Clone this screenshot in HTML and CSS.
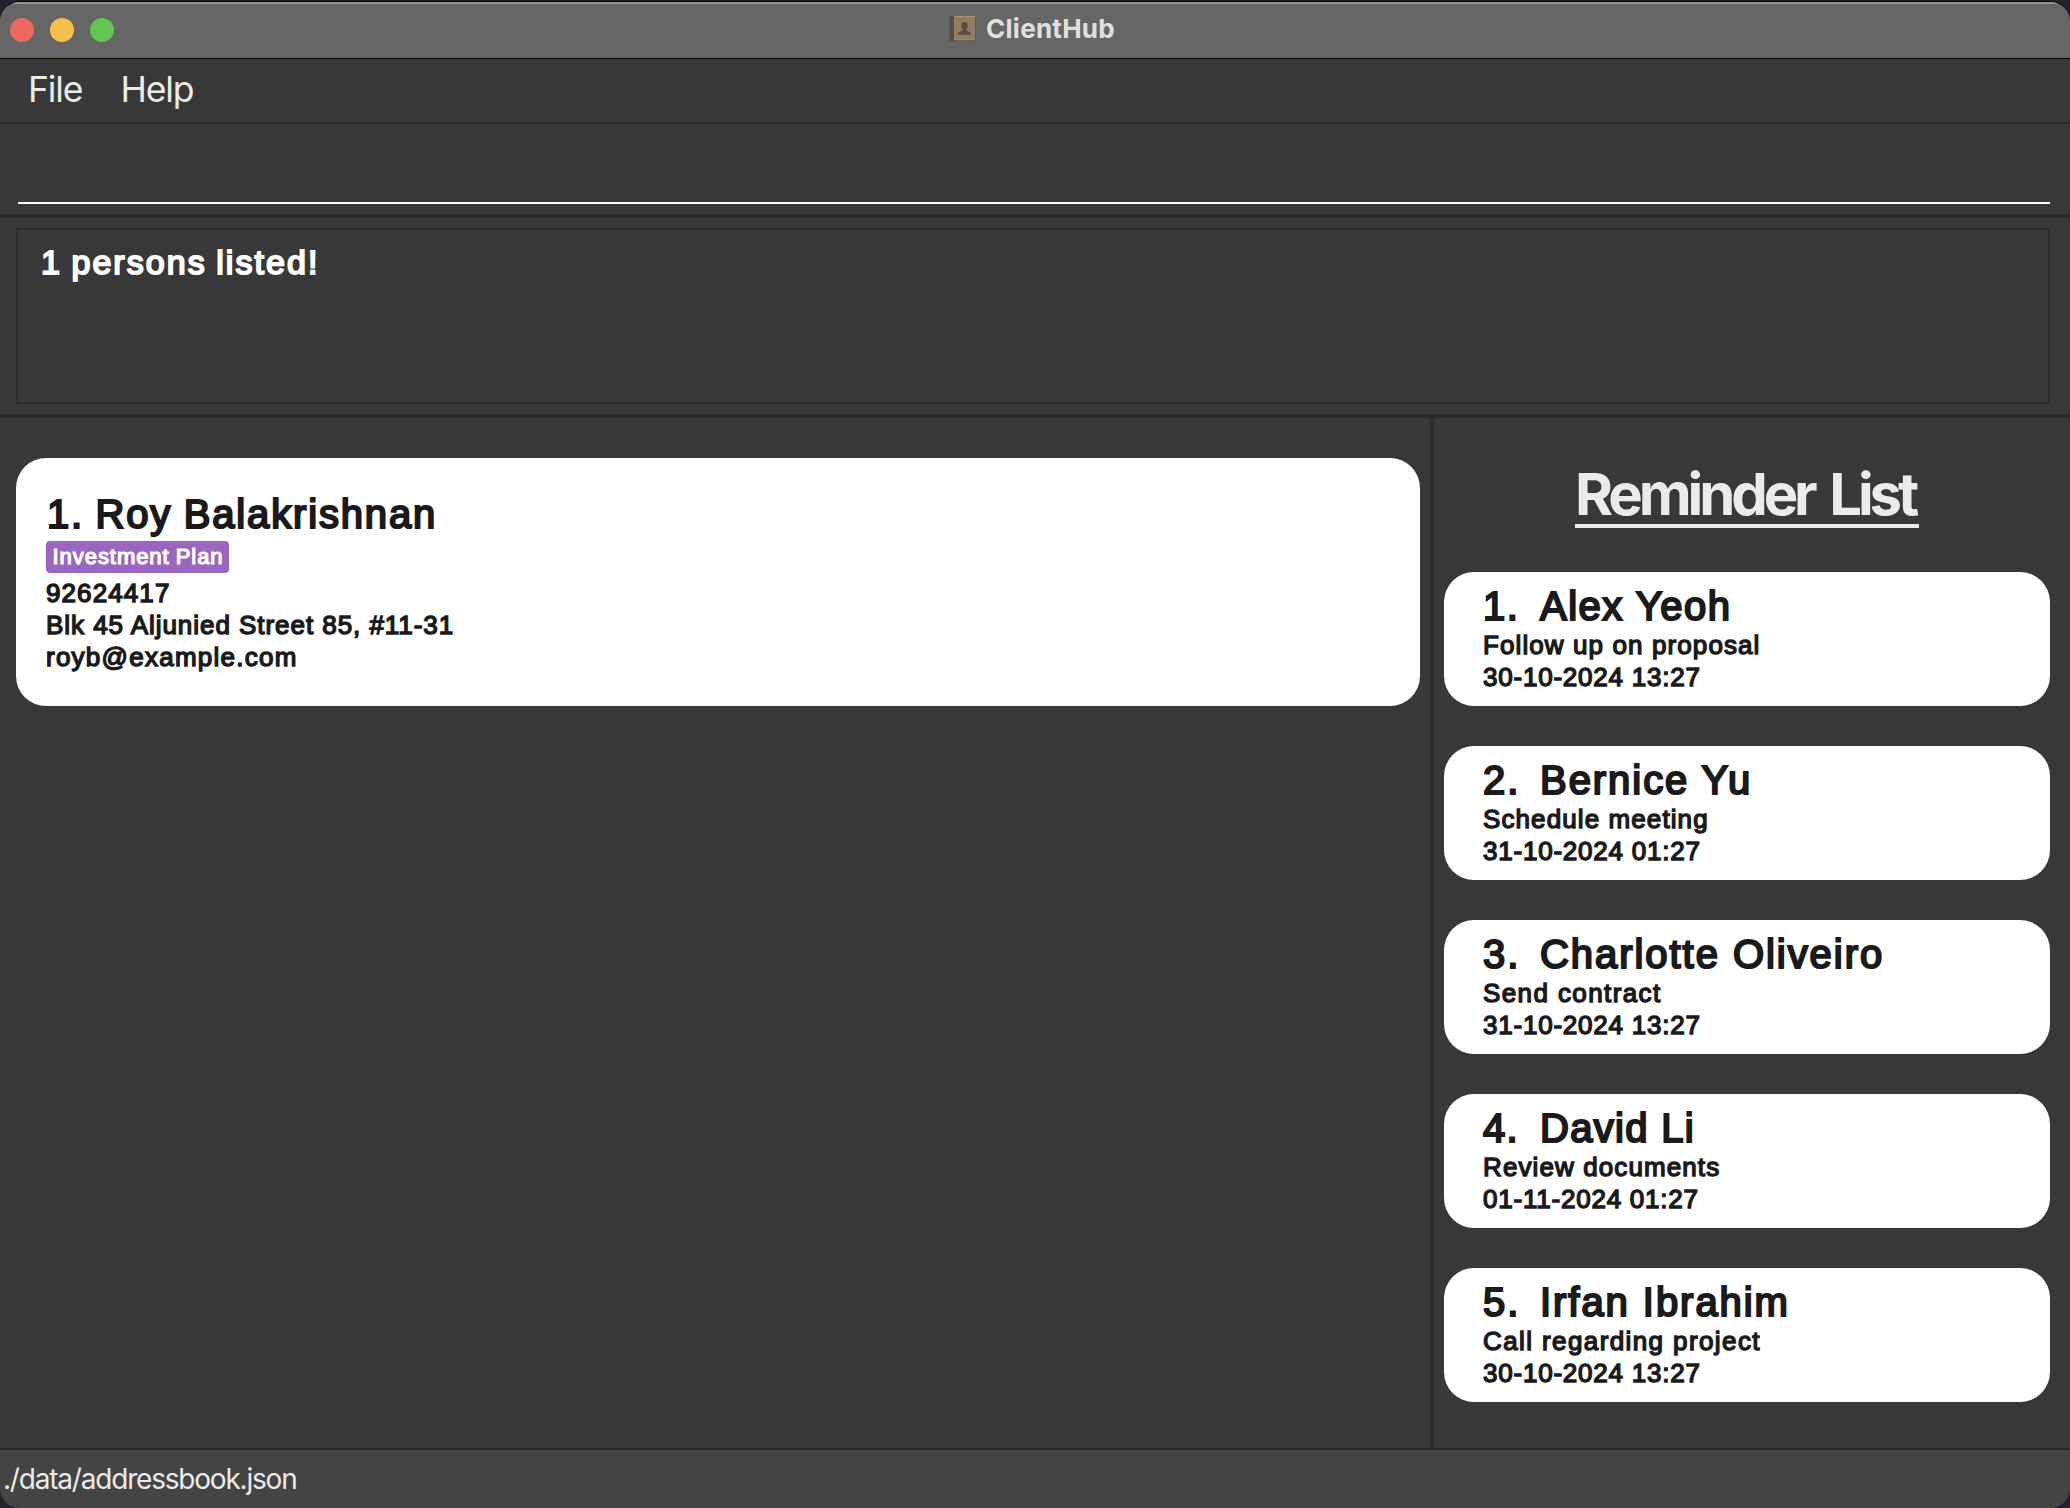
FILE: index.html
```html
<!DOCTYPE html>
<html lang="en">
<head>
<meta charset="utf-8">
<title>ClientHub</title>
<link rel="stylesheet" href="styles.css">
</head>
<body>
<div class="window">
  <header class="titlebar">
    <div class="lights"><i class="light red"></i><i class="light amber"></i><i class="light green"></i></div>
    <div class="app">
      <svg class="app-icon" width="30" height="28" viewBox="0 0 30 28">
        <rect x="1" y="1.5" width="27" height="25" rx="1.5" fill="#5c5a56"/>
        <path d="M2 1h4v25H2z" fill="#554e46"/>
        <path d="M6 1h21v24H6z" fill="#8e7d61"/>
        <path d="M6 1h21v1H6z" fill="#a39373"/>
        <path d="M6 24h21v1.2H6z" fill="#a08a60"/>
        <path d="M16.500 7c2.200 0 3.300 1.600 3.300 3.700 0 1.600-.7 2.800-1.500 3.500v1.300c1.800.8 4.700 1.200 5 4.200H9.700c.3-3 3.200-3.400 5-4.200v-1.300c-.8-.7-1.500-1.900-1.500-3.500 0-2.100 1.100-3.700 3.300-3.700z" fill="#574e40"/>
      </svg>
      <span class="app-name">ClientHub</span>
    </div>
  </header>
  <nav class="menu"><span>File</span><span>Help</span></nav>
  <section class="command"><div class="field"></div></section>
  <section class="result"><div class="result-box"><span class="rounded result-text">1 persons listed!</span></div></section>
  <main class="content">
    <section class="persons">
      <article class="person rounded">
        <h2 class="name full"><span>1. Roy Balakrishnan</span></h2>
        <div class="tags"><span class="tag">Investment Plan</span></div>
        <p class="line">92624417</p>
        <p class="line address">Blk 45 Aljunied Street 85, #11-31</p>
        <p class="line email">royb@example.com</p>
      </article>
    </section>
    <aside class="reminders">
      <h1 class="heading"><span>Reminder List</span></h1>
      <article class="reminder rounded">
        <h2 class="name"><span class="num">1.</span>Alex Yeoh</h2>
        <p class="line">Follow up on proposal</p>
        <p class="line date">30-10-2024 13:27</p>
      </article>
      <article class="reminder rounded">
        <h2 class="name wide"><span class="num">2.</span>Bernice Yu</h2>
        <p class="line">Schedule meeting</p>
        <p class="line date">31-10-2024 01:27</p>
      </article>
      <article class="reminder rounded">
        <h2 class="name wide"><span class="num">3.</span>Charlotte Oliveiro</h2>
        <p class="line wide">Send contract</p>
        <p class="line date">31-10-2024 13:27</p>
      </article>
      <article class="reminder rounded">
        <h2 class="name narrow"><span class="num">4.</span>David Li</h2>
        <p class="line">Review documents</p>
        <p class="line date">01-11-2024 01:27</p>
      </article>
      <article class="reminder rounded">
        <h2 class="name wide"><span class="num">5.</span>Irfan Ibrahim</h2>
        <p class="line wide">Call regarding project</p>
        <p class="line date">30-10-2024 13:27</p>
      </article>
    </aside>
  </main>
  <footer class="status">./data/addressbook.json</footer>
</div>
</body>
</html>
```
FILE: styles.css
```css
* { box-sizing: border-box; margin: 0; padding: 0; }
body { width: 2070px; height: 1508px; overflow: hidden; background: #22222c; font-family: Inter, "Open Sans", sans-serif; color: #ebebeb; padding-top: 1px; }
.window { height: 1507px; display: flex; flex-direction: column; border-radius: 20px; overflow: hidden; background: #383838; border-top: 1px solid #000; }
.titlebar { height: 57px; flex: none; background: #666; border-top: 2px solid #959595; border-bottom: 1px solid #000; display: grid; grid-template-columns: 1fr auto 1fr; align-items: center; }
.lights { display: flex; gap: 16px; padding-left: 10px; }
.light { width: 24px; height: 24px; border-radius: 50%; margin-bottom: 2px; }
.red { background: #ee6a5f; }
.amber { background: #f5bf4f; }
.green { background: #61c654; }
.app { display: flex; align-items: center; gap: 8px; padding: 0 7px 4px 0; }
.app-icon { display: block; }
.app-name { font-size: 26px; line-height: 32px; font-weight: 700; letter-spacing: 0.25px; color: #e0e0e0; }
.menu { height: 65px; flex: none; border-bottom: 2px solid #2b2b2b; display: flex; align-items: center; gap: 38px; padding: 0 0 2px 28px; font-size: 35.5px; line-height: 44px; letter-spacing: -1.1px; }
.command { height: 94px; flex: none; border-bottom: 4px solid #2b2b2b; padding: 0 20px 10px 18px; display: flex; }
.field { flex: 1; border-bottom: 2px solid #fff; }
.result { height: 200px; flex: none; border-bottom: 4px solid #2b2b2b; padding: 10px 20px 10px 16px; display: flex; }
.result-box { flex: 1; border: 2px solid #2b2b2b; padding: 12px 23px; }
.rounded { font-family: "Liberation Sans", Arial, sans-serif; font-weight: 400; -webkit-text-stroke: 1.4px currentColor; }
.result-text { display: inline-block; font-size: 34px; line-height: 40px; color: #fff; letter-spacing: 2.05px; word-spacing: -2px; -webkit-text-stroke-width: 1.9px; }
.content { flex: 1; min-height: 0; display: flex; }
.persons { width: 1434px; border-right: 4px solid #2b2b2b; padding: 40px 10px 0 16px; }
.person { height: 248px; border-radius: 30px; background: #fff; color: #1a1a1a; padding: 33px 30px; }
.name { font-size: 40px; line-height: 46px; font-weight: 400; letter-spacing: 1.5px; -webkit-text-stroke-width: 2.1px; white-space: nowrap; }
.name.full { letter-spacing: 1.85px; word-spacing: -1.5px; padding-left: 1px; }
.name.wide { letter-spacing: 1.95px; }
.name.narrow { letter-spacing: 1.3px; }
.tags { display: flex; height: 40px; padding-top: 4px; }
.tag { height: 32px; width: 183px; border-radius: 4px; background: #9b66c0; color: #fff; font-size: 22px; line-height: 31px; letter-spacing: 0.95px; word-spacing: -1px; padding: 0 6.5px; white-space: nowrap; -webkit-text-stroke-width: 1.2px; }
.line { font-size: 26px; line-height: 32px; letter-spacing: 1.1px; white-space: nowrap; }
.line.wide { letter-spacing: 1.4px; }
.line.address { letter-spacing: 0.95px; }
.line.email { letter-spacing: 1.25px; }
.line.date { letter-spacing: 0.78px; }
.reminders { flex: 1; padding: 35px 20px 0 10px; }
.heading { height: 119px; display: flex; justify-content: center; align-items: flex-start; font-size: 58px; line-height: 83px; font-weight: 700; letter-spacing: -4.1px; word-spacing: 6px; white-space: nowrap; }
.heading span { width: 344px; height: 75px; border-bottom: 4px solid #ebebeb; }
.reminder { height: 134px; border-radius: 30px; background: #fff; color: #1a1a1a; margin-bottom: 40px; padding: 11px 39px; }
.num { display: inline-block; width: 57px; }
.status { height: 60px; flex: none; background: #444; border-top: 2px solid #2b2b2b; padding-left: 3px; font-size: 28px; line-height: 59px; letter-spacing: -1.2px; }
```
